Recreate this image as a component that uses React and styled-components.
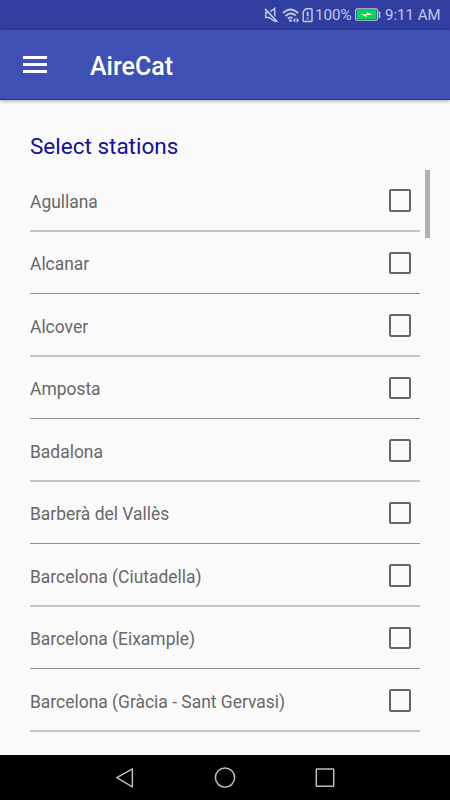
import React, { useState } from 'react';
import styled, { createGlobalStyle } from 'styled-components';

const stations = [
    'Agullana',
    'Alcanar',
    'Alcover',
    'Amposta',
    'Badalona',
    'Barberà del Vallès',
    'Barcelona (Ciutadella)',
    'Barcelona (Eixample)',
    'Barcelona (Gràcia - Sant Gervasi)',
];

const MutedIcon = () => (
    <svg width="16" height="18" viewBox="0 0 16 18" fill="none" stroke="#c3c8e8" strokeWidth="1.5">
        <path d="M1.7 6.5H5L10.7 2.4V15.3L5 11.5H1.7Z" />
        <path d="M2 2.2L14.5 15.4" stroke="#303f9f" strokeWidth="1.6" />
        <path d="M1 2.8L13.5 16" strokeWidth="1.7" />
    </svg>
);

const WifiIcon = () => (
    <svg width="18" height="18" viewBox="0 0 18 18" fill="none" stroke="#c3c8e8" strokeWidth="1.8">
        <path d="M1 7Q8.5 0 16 7" />
        <path d="M3.5 10Q8.5 5.2 13.7 9.5" />
        <path d="M6 12.7Q8.5 10.6 10.5 12" />
        <circle cx="8.5" cy="14.7" r="1.4" fill="#c3c8e8" stroke="none" />
        <path d="M10.8 14.2L13.3 11.7V16.7ZM17.2 14.2L14.5 11.7V16.7Z" fill="#c3c8e8" stroke="none" />
    </svg>
);

const SimIcon = () => (
    <svg width="11" height="16" viewBox="0 0 11 16" fill="none" stroke="#c3c8e8" strokeWidth="1.5">
        <path d="M4 1.8H9.2Q10 1.8 10 2.6V13.7Q10 14.5 9.2 14.5H2Q1.2 14.5 1.2 13.7V4.7Z" />
        <path d="M5.6 4.7V9.3M5.6 10.7V12.3" strokeWidth="1.8" />
    </svg>
);

const BatteryIcon = () => (
    <svg width="26" height="14" viewBox="0 0 26 14" fill="none">
        <rect x="0.6" y="0.9" width="22" height="11.4" rx="1.6" stroke="#c3c8e8" strokeWidth="1.1" />
        <rect x="1.8" y="2.1" width="19.6" height="9" fill="#08d850" />
        <path d="M24.5 3.5V10" stroke="#c3c8e8" strokeWidth="1.5" />
        <path d="M6 6.2L12.1 6.2L11.8 4.3L17.5 7.1L11.4 7.1L11.8 9Z" fill="#fff" />
    </svg>
);

function Station({ name }) {
    const [checked, setChecked] = useState(false);

    return (
        <StationRow onClick={() => setChecked(!checked)}>
            <StationName>{name}</StationName>
            <Checkbox role="checkbox" aria-checked={checked} aria-label={name} $checked={checked} />
        </StationRow>
    );
}

export default function App() {
    return (
        <Screen>
            <GlobalStyle />
            <StatusBar>
                <MutedIcon />
                <WifiIcon />
                <SimIcon />
                <BatteryLevel>100%</BatteryLevel>
                <BatteryIcon />
                <Clock>9:11 AM</Clock>
            </StatusBar>
            <AppBar>
                <MenuButton aria-label="Menu">
                    <span />
                    <span />
                    <span />
                </MenuButton>
                <AppTitle>AireCat</AppTitle>
            </AppBar>
            <Content>
                <Heading>Select stations</Heading>
                <ListArea>
                    <StationList>
                        {stations.map((name) => (
                            <Station key={name} name={name} />
                        ))}
                    </StationList>
                    <ScrollThumb />
                </ListArea>
            </Content>
            <NavBar>
                <NavButton aria-label="Back">
                    <svg width="24" height="24" viewBox="0 0 24 24">
                        <path d="M3.8 11.6L19.4 2.9V20.8Z" />
                    </svg>
                </NavButton>
                <NavButton aria-label="Home">
                    <svg width="24" height="24" viewBox="0 0 24 24">
                        <circle cx="12" cy="11.6" r="9.6" />
                    </svg>
                </NavButton>
                <NavButton aria-label="Recents">
                    <svg width="24" height="24" viewBox="0 0 24 24">
                        <rect x="3.3" y="2.9" width="17.4" height="17.4" rx="0.6" />
                    </svg>
                </NavButton>
            </NavBar>
        </Screen>
    );
}

const GlobalStyle = createGlobalStyle`
    body {
        margin: 0;
        background: #000;
        font-family: Roboto, sans-serif;
    }

    * {
        box-sizing: border-box;
    }
`;

const Screen = styled.div`
    display: flex;
    flex-direction: column;
    width: 450px;
    height: 800px;
    overflow: hidden;
    background: #fafafa;
`;

const StatusBar = styled.div`
    display: flex;
    align-items: center;
    flex: none;
    height: 30px;
    padding-left: 264px;
    background: #303f9f;
    color: #c3c8e8;
    white-space: nowrap;

    svg {
        flex: none;
    }

    svg:nth-of-type(2) {
        margin-left: 2px;
    }

    svg:nth-of-type(3) {
        margin-left: 2px;
    }
`;

const BatteryLevel = styled.span`
    width: 42px;
    padding-left: 2px;
    font-size: 15.2px;
    line-height: 30px;
`;

const Clock = styled.span`
    margin-left: 4px;
    font-size: 15px;
    line-height: 30px;
`;

const AppBar = styled.header`
    display: flex;
    align-items: center;
    position: relative;
    flex: none;
    height: 70px;
    padding-left: 23px;
    background: #3f51b5;
    border-bottom: 1px solid #1a36a6;
    box-shadow: 0 1px 4px rgba(0, 0, 0, 0.35);
`;

const MenuButton = styled.button`
    display: flex;
    flex-direction: column;
    justify-content: space-between;
    width: 24px;
    height: 17px;
    padding: 0;
    border: none;
    background: none;

    span {
        height: 3px;
        background: #fff;
    }
`;

const AppTitle = styled.h1`
    margin: 5px 0 0 43px;
    color: #fff;
    font-size: 25px;
    font-weight: 500;
    line-height: 30px;
`;

const Content = styled.main`
    display: flex;
    flex-direction: column;
    flex: 1;
    min-height: 0;
    padding-top: 31px;
`;

const Heading = styled.h2`
    margin: 0;
    padding-left: 30px;
    height: 38px;
    color: #1010a0;
    font-size: 22.5px;
    font-weight: 400;
    line-height: 30px;
`;

const ListArea = styled.div`
    position: relative;
    padding: 0 30px;
`;

const StationList = styled.ul`
    margin: 0;
    padding: 0;
    list-style: none;
`;

const Checkbox = styled.span`
    width: 22px;
    height: 22px;
    border: 2px solid #646464;
    border-radius: 2px;
    background: ${(props) => (props.$checked ? '#3f51b5' : 'transparent')};
`;

const StationName = styled.span`
    color: #686868;
    font-size: 17.45px;
    line-height: 26px;
`;

/* rows alternate 63/62px, a 50dp row on a 1.25 density screen */
const StationRow = styled.li`
    display: flex;
    align-items: flex-start;
    justify-content: space-between;
    height: 62px;
    padding: 20px 9px 0 0;
    border-bottom: 1px solid #8f8f8f;

    ${StationName} {
        margin-top: -1px;
    }

    &:nth-child(odd) {
        height: 63px;
        border-bottom: 2px solid #c5c5c5;

        ${StationName} {
            margin-top: 0;
        }

        ${Checkbox} {
            height: 23px;
        }
    }
`;

const ScrollThumb = styled.div`
    position: absolute;
    top: 1px;
    right: 20px;
    width: 5px;
    height: 68px;
    background: #b1b1b1;
`;

const NavBar = styled.nav`
    display: flex;
    align-items: center;
    justify-content: center;
    gap: 76px;
    flex: none;
    height: 45px;
    background: #000;
`;

const NavButton = styled.button`
    display: flex;
    width: 24px;
    height: 24px;
    padding: 0;
    border: none;
    background: none;

    svg {
        fill: none;
        stroke: #bdbdbd;
        stroke-width: 1.5;
        stroke-linejoin: round;
    }
`;
